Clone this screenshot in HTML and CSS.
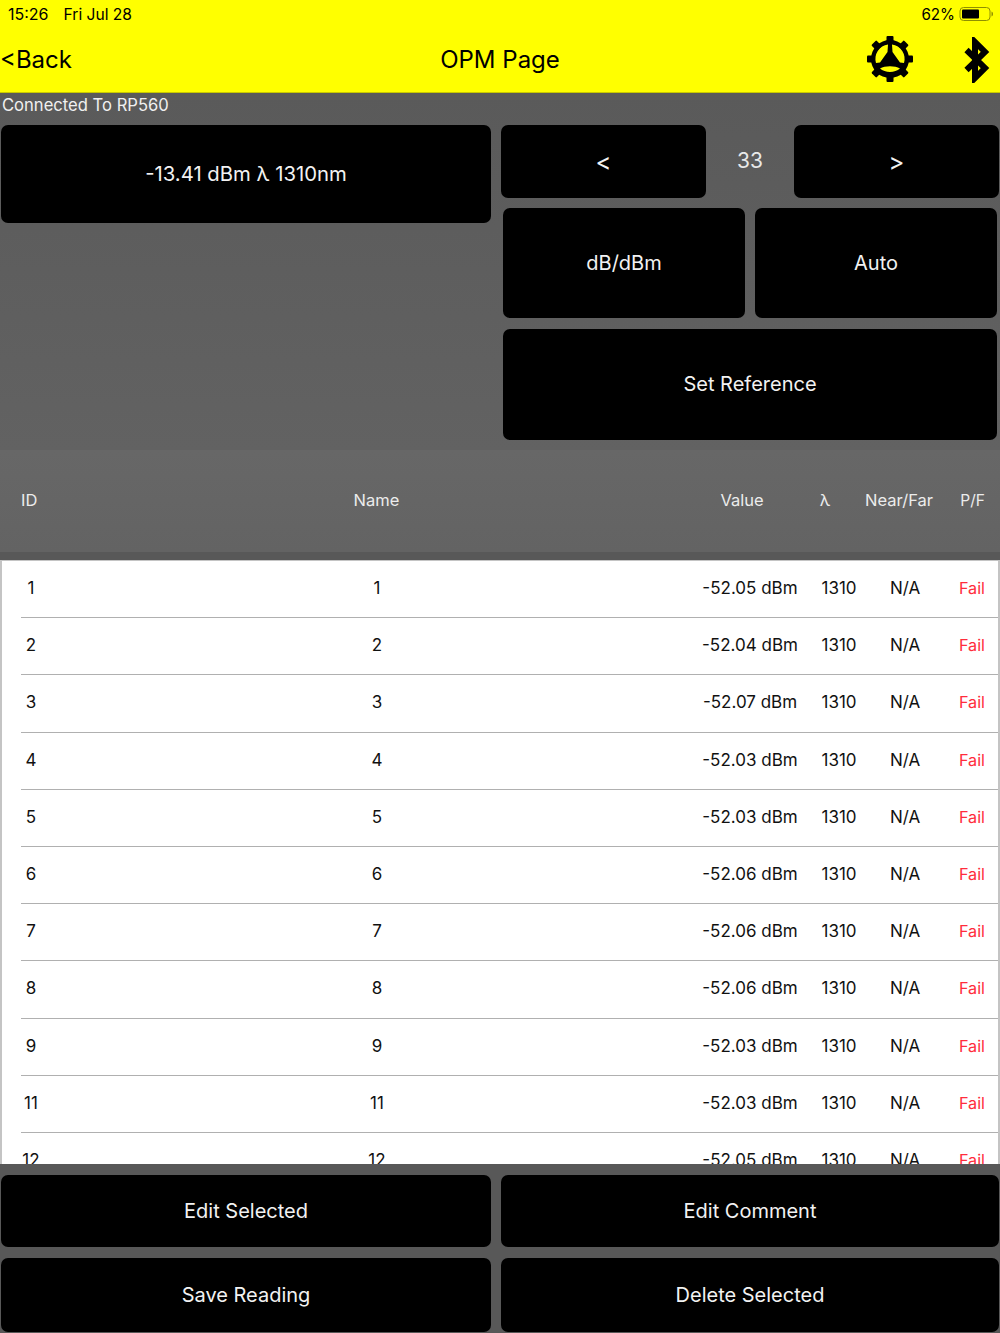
FILE: index.html
```html
<!DOCTYPE html>
<html lang="en">
<head>
    <meta charset="UTF-8">
    <title>OPM Page</title>
    <link rel="stylesheet" href="styles.css">
</head>
<body>
    <!-- Status + nav bar -->
    <div class="topbar">
        <div class="status">
            <span class="status-time">15:26</span>
            <span class="status-date">Fri Jul 28</span>
            <span class="status-batt">62%</span>
            <svg class="battery" width="34" height="16" viewBox="0 0 34 16">
                <rect x="1" y="1.5" width="30" height="13" rx="3.5" fill="none" stroke="#8f8f00" stroke-width="1"/>
                <rect x="3" y="3.5" width="17" height="9" rx="1" fill="#000"/>
                <path d="M32.5 5.5c1.2.4 1.5 1.4 1.5 2.5s-.3 2.100-1.500 2.500z" fill="#8f8f00"/>
            </svg>
        </div>
        <div class="nav">
            <a class="nav-back">&lt;Back</a>
            <span class="nav-title">OPM Page</span>
            <svg class="gear" width="48" height="48" viewBox="-24 -24 48 48">
                <g fill="#000">
                    <rect x="-3.500" y="-23" width="7" height="8" rx="1"/>
                    <rect x="-3.500" y="-23" width="7" height="8" rx="1" transform="rotate(45)"/>
                    <rect x="-3.500" y="-23" width="7" height="8" rx="1" transform="rotate(90)"/>
                    <rect x="-3.500" y="-23" width="7" height="8" rx="1" transform="rotate(135)"/>
                    <rect x="-3.500" y="-23" width="7" height="8" rx="1" transform="rotate(180)"/>
                    <rect x="-3.500" y="-23" width="7" height="8" rx="1" transform="rotate(225)"/>
                    <rect x="-3.500" y="-23" width="7" height="8" rx="1" transform="rotate(270)"/>
                    <rect x="-3.500" y="-23" width="7" height="8" rx="1" transform="rotate(315)"/>
                </g>
                <!-- disk with three holes: two upper sectors and the lens at the bottom -->
                <path fill="#000" fill-rule="evenodd" d="M0 -19A19 19 0 1 1 0 19A19 19 0 1 1 0 -19z
                    M-2 -14.500A14.500 14.500 0 0 0 -14 4L-10 3.500-2.500 -7z
                    M2 -14.500A14.500 14.500 0 0 1 14 4L10 3.500 2.500 -7z
                    M-10 9.500C-5 6.500 5 6.500 10 9.500 5 14 -5 14 -10 9.500z"/>
            </svg>
            <svg class="bt" width="28" height="46" viewBox="0 0 28 46">
                <path d="M3.500 13 22 31 12 41V5L22 15 3.500 33" fill="none" stroke="#000" stroke-width="6"/>
            </svg>
        </div>
    </div>

    <div class="main">
        <div class="conn">Connected To RP560</div>

        <div class="controls">
            <div class="col-left">
                <button class="btn readout">-13.41 dBm λ 1310nm</button>
            </div>
            <div class="col-right">
                <div class="stepper">
                    <button class="btn step">&lt;</button>
                    <span class="step-num">33</span>
                    <button class="btn step">&gt;</button>
                </div>
                <div class="pair">
                    <button class="btn tall">dB/dBm</button>
                    <button class="btn tall">Auto</button>
                </div>
                <button class="btn tall">Set Reference</button>
            </div>
        </div>

        <!-- Table -->
        <div class="thead">
            <span>ID</span>
            <span class="th-name">Name</span>
            <span>Value</span>
            <span>λ</span>
            <span>Near/Far</span>
            <span class="th-pf">P/F</span>
        </div>
        <div class="tbody">
            <div class="row"><span>1</span><span class="c-name">1</span><span>-52.05 dBm</span><span>1310</span><span>N/A</span><span class="c-fail">Fail</span></div>
            <div class="row"><span>2</span><span class="c-name">2</span><span>-52.04 dBm</span><span>1310</span><span>N/A</span><span class="c-fail">Fail</span></div>
            <div class="row"><span>3</span><span class="c-name">3</span><span>-52.07 dBm</span><span>1310</span><span>N/A</span><span class="c-fail">Fail</span></div>
            <div class="row"><span>4</span><span class="c-name">4</span><span>-52.03 dBm</span><span>1310</span><span>N/A</span><span class="c-fail">Fail</span></div>
            <div class="row"><span>5</span><span class="c-name">5</span><span>-52.03 dBm</span><span>1310</span><span>N/A</span><span class="c-fail">Fail</span></div>
            <div class="row"><span>6</span><span class="c-name">6</span><span>-52.06 dBm</span><span>1310</span><span>N/A</span><span class="c-fail">Fail</span></div>
            <div class="row"><span>7</span><span class="c-name">7</span><span>-52.06 dBm</span><span>1310</span><span>N/A</span><span class="c-fail">Fail</span></div>
            <div class="row"><span>8</span><span class="c-name">8</span><span>-52.06 dBm</span><span>1310</span><span>N/A</span><span class="c-fail">Fail</span></div>
            <div class="row"><span>9</span><span class="c-name">9</span><span>-52.03 dBm</span><span>1310</span><span>N/A</span><span class="c-fail">Fail</span></div>
            <div class="row"><span>11</span><span class="c-name">11</span><span>-52.03 dBm</span><span>1310</span><span>N/A</span><span class="c-fail">Fail</span></div>
            <div class="row"><span>12</span><span class="c-name">12</span><span>-52.05 dBm</span><span>1310</span><span>N/A</span><span class="c-fail">Fail</span></div>
        </div>

        <!-- Bottom buttons -->
        <div class="actions">
            <button class="btn">Edit Selected</button>
            <button class="btn">Edit Comment</button>
            <button class="btn">Save Reading</button>
            <button class="btn">Delete Selected</button>
        </div>
    </div>
</body>
</html>
```
FILE: styles.css
```css
* {
    margin: 0;
    padding: 0;
    box-sizing: border-box;
}
body {
    width: 1000px;
    height: 1333px;
    overflow: hidden;
    font-family: Inter, "Noto Sans", sans-serif;
    background: #5a5a5a;
    color: #000;
}

/* Top bar */
.topbar {
    height: 93px;
    background: #ffff00;
    border-bottom: 1px solid #c9c900;
}
.status {
    display: flex;
    align-items: center;
    height: 28px;
    padding: 0 7px 0 8px;
    font-size: 16px;
}
.status-date {
    margin-left: 15px;
    font-size: 15.600px;
}
.status-batt {
    margin-left: auto;
    margin-right: 4px;
    font-size: 15.200px;
}
.nav {
    position: relative;
    display: flex;
    align-items: center;
    height: 64px;
}
.nav-back {
    margin-top: -2px;
    font-size: 24px;
}
.nav-title {
    position: absolute;
    left: 0;
    right: 0;
    margin-top: -2px;
    text-align: center;
    font-size: 24px;
}
.gear {
    margin-left: auto;
    margin-right: 49px;
    margin-top: -2px;
}
.bt {
    margin-right: 9px;
    margin-top: -1px;
}

/* Main area */
.main {
    height: 1240px;
    background: linear-gradient(#5a5a5a, #626262 357px, #585858 357px);
}
.conn {
    height: 32px;
    padding: 1px 0 0 2px;
    font-size: 16.600px;
    line-height: 22px;
    color: #f0f0f0;
}
.btn {
    display: block;
    background: #000;
    color: #f2f2f2;
    border: none;
    border-radius: 7px;
    font-family: inherit;
    font-size: 20px;
}
.controls {
    display: flex;
    height: 325px;
}
.col-left {
    width: 501px;
    padding-left: 1px;
}
.readout {
    width: 490px;
    height: 98px;
    padding-bottom: 2px;
    font-size: 20.300px;
}
.col-right {
    display: flex;
    flex-direction: column;
    gap: 10px;
    width: 499px;
}
.col-right > .tall {
    width: 494px;
    height: 111px;
    margin: 1px 0 0 2px;
    padding-bottom: 2px;
}
.stepper {
    display: flex;
    align-items: center;
    height: 73px;
}
.step {
    width: 205px;
    height: 73px;
    font-size: 24px;
}
.step-num {
    width: 88px;
    text-align: center;
    font-size: 21px;
    color: #e8e8e8;
    margin-top: -3px;
}
.pair {
    display: flex;
    gap: 10px;
    margin-left: 2px;
    width: 494px;
    height: 110px;
}
.pair .tall {
    flex: 1;
}

/* Table */
.thead {
    display: grid;
    grid-template-columns: 21px 679px 84px 82px 66px 53px;
    align-items: center;
    justify-items: center;
    height: 102px;
    padding-bottom: 2px;
    background: linear-gradient(#676767, #636363);
    color: #ececec;
    font-size: 16.500px;
    text-align: center;
}
.thead span:first-child {
    margin-left: 21px;
    justify-self: start;
}
.th-name {
    padding-left: 32px;
}
.th-pf {
    justify-self: end;
    font-size: 15.500px;
}
.tbody {
    height: 604px;
    margin-top: 8px;
    background: #fff;
    border-top: 1px solid #c4c4c4;
    border-left: 2px solid #c4c4c4;
    border-right: 2px solid #c4c4c4;
    overflow: hidden;
}
.row {
    display: grid;
    grid-template-columns: 20px 653px 112px 66px 66px 1fr;
    align-items: center;
    justify-items: center;
    height: 57.200px;
    margin-left: 19px;
    padding: 0 13px 2px 0;
    border-bottom: 1px solid #b0b0b0;
    font-size: 17px;
    color: #111;
}
.c-name {
    margin-left: 19px;
}
.c-fail {
    justify-self: end;
    color: #ff2d3c;
    font-size: 16.200px;
}

/* Bottom buttons */
.actions {
    display: grid;
    grid-template-columns: 490px 498px;
    grid-template-rows: 72px 74px;
    gap: 11px 10px;
    padding: 11px 0 0 1px;
}
```
